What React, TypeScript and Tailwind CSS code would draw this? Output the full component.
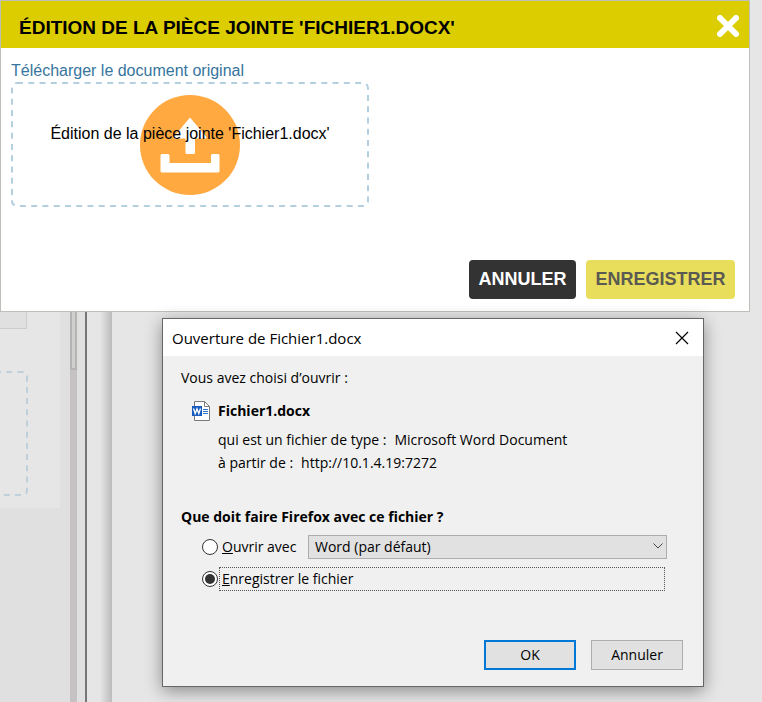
import React from "react";

function UploadIcon() {
  return (
    <svg className="size-[100px]" viewBox="0 0 100 100" aria-hidden="true">
      <circle cx="50" cy="50" r="50" fill="#ffa940" />
      <path
        d="M50 22.5 L66 41.5 Q67 43.5 65 43.5 H55 V57.500 Q55 59 53.500 59 H47 Q45.500 59 45.500 57.500 V43.500 H35 Q33 43.500 34 41.500 Z"
        fill="#fff"
      />
      <path
        d="M22 59 H28 Q29.500 59 29.500 60.500 V68 H71 V60.500 Q71 59 72.500 59 H78 Q79.500 59 79.500 60.500 V76 Q79.500 77.500 78 77.500 H22 Q20.500 77.500 20.500 76 V60.500 Q20.500 59 22 59 Z"
        fill="#fff"
      />
    </svg>
  );
}

function WordIcon() {
  return (
    <svg className="h-5 w-[18px]" viewBox="0 0 18 20" aria-hidden="true">
      <path d="M2.500 .5 H12.500 L17.500 5.500 V19.500 H2.500 Z" fill="#fff" stroke="#7a7a76" />
      <path d="M12.500 .5 V5.500 H17.500" fill="none" stroke="#7a7a76" />
      <path d="M11 8.500 H16 M11 10.500 H16 M11 12.500 H16" stroke="#2b72c8" />
      <rect y="5" width="10" height="10" fill="#185abd" />
      <path d="M1.500 7.500 L3.200 12.500 L5 8 L6.800 12.500 L8.500 7.500" fill="none" stroke="#fff" strokeWidth="1.400" />
    </svg>
  );
}

function Backdrop() {
  return (
    <div className="absolute inset-0 flex bg-[#e6e6e6]" aria-hidden="true">
      <div className="w-[70px] overflow-hidden bg-[#e0e0e0]">
        <div className="flex h-[508px] w-[60px] flex-col bg-[#e6e6e6]">
          <div className="h-[329px] w-[27px] border-r border-b border-[#cccccf] bg-[#e0e0e0]" />
          <svg className="mt-[42px] h-[125px] w-7" viewBox="0 0 28 125">
            <path
              d="M0 1 H22 Q27 1 27 6 V119 Q27 124 22 124 H0"
              fill="none"
              stroke="#c0d0da"
              strokeWidth="2"
              strokeDasharray="6 5.200"
              strokeDashoffset="5"
            />
          </svg>
        </div>
      </div>
      <div className="w-[7px] bg-[#c6c2c3]">
        <div className="h-[370px] border-x-2 border-b-2 border-[#b4b4b2] bg-[#cfcfcd]" />
      </div>
      <div className="w-2 bg-[#e0e0e0]" />
      <div className="w-0.5 bg-[#757778]" />
      <div className="w-[13px]" />
      <div className="w-3 bg-linear-to-r from-[#e6e6e6] to-[#bcbcbc]" />
    </div>
  );
}

function AttachmentModal() {
  return (
    <section className="relative mr-3 border border-[#c0beb8] bg-white font-['Liberation_Sans',Arial,sans-serif]">
      <header className="flex h-[47px] items-center justify-between bg-[#dccd00] pr-2.5 pl-[18px]">
        <h1 className="pt-1.5 text-[19px] leading-6 font-bold text-black">
          ÉDITION DE LA PIÈCE JOINTE 'FICHIER1.DOCX'
        </h1>
        <button type="button" aria-label="Fermer" className="mt-0.5">
          <svg className="size-[22px]" viewBox="0 0 22 22">
            <path d="M3 3 L19 19 M19 3 L3 19" stroke="#fff" strokeWidth="6" strokeLinecap="round" />
          </svg>
        </button>
      </header>
      <div className="px-2.5 pt-3">
        <a href="#original" className="block text-base leading-[22px] text-[#36759d]">
          Télécharger le document original
        </a>
        <div className="relative flex h-[125px] w-[358px] items-center justify-center">
          <svg className="absolute inset-0 size-full" viewBox="0 0 358 125" aria-hidden="true">
            <rect
              x="1"
              y="1"
              width="356"
              height="123"
              rx="5"
              fill="none"
              stroke="#b4cfe0"
              strokeWidth="2"
              strokeDasharray="6 5.270"
            />
          </svg>
          <UploadIcon />
          <p className="absolute inset-x-0 top-10 text-center text-base leading-6 text-black">
            Édition de la pièce jointe 'Fichier1.docx'
          </p>
        </div>
      </div>
      <footer className="mt-[53px] flex justify-end gap-2.5 pr-3.5 pb-3 text-lg font-bold">
        <button type="button" className="h-[39px] w-[107px] rounded bg-[#333333] pb-0.5 text-white">
          ANNULER
        </button>
        <button type="button" className="h-[39px] w-[149px] rounded bg-[#e8de5b] pb-0.5 text-[#5a5a52]">
          ENREGISTRER
        </button>
      </footer>
    </section>
  );
}

const radioClass =
  "size-4 appearance-none rounded-full border border-[#333333] bg-white p-0.5 checked:before:block checked:before:size-2.5 checked:before:rounded-full checked:before:bg-[#333333]";

function OpenFileDialog() {
  return (
    <section
      role="dialog"
      aria-labelledby="dialog-title"
      className="absolute top-[318px] left-[162px] w-[542px] border border-[#666666] bg-[#f0f0f0] font-['Open_Sans','Noto_Sans',sans-serif] text-sm leading-5 text-black shadow-[0_4px_16px_rgba(0,0,0,0.4)]"
    >
      <header className="flex h-[37px] items-center justify-between bg-white pr-3.5 pl-[9px]">
        <h2 id="dialog-title" className="text-[15px]">
          Ouverture de Fichier1.docx
        </h2>
        <button type="button" aria-label="Fermer la fenêtre">
          <svg className="size-[14px]" viewBox="0 0 14 14">
            <path d="M1 1 L13 13 M13 1 L1 13" stroke="#000" strokeWidth="1.200" />
          </svg>
        </button>
      </header>
      <div className="pt-3 pr-5 pb-4 pl-[18px]">
        <p>Vous avez choisi d’ouvrir :</p>
        <div className="mt-[13px] flex gap-2 pl-[11px]">
          <WordIcon />
          <p className="font-bold">Fichier1.docx</p>
        </div>
        <dl className="mt-[9px] flex flex-col gap-[3px] pl-[37px]">
          <div className="flex gap-2">
            <dt>qui est un fichier de type :</dt>
            <dd>Microsoft Word Document</dd>
          </div>
          <div className="flex gap-2">
            <dt>à partir de :</dt>
            <dd>http://10.1.4.19:7272</dd>
          </div>
        </dl>
        <fieldset className="mt-[34px] pl-[21px]">
          <legend className="-ml-[21px] font-bold">Que doit faire Firefox avec ce fichier ?</legend>
          <div className="mt-2 flex h-6 items-center pr-4">
            <input id="open-with" type="radio" name="action" className={radioClass} />
            <label htmlFor="open-with" className="ml-1 w-[86px] whitespace-nowrap">
              <u>O</u>uvrir avec
            </label>
            <div className="relative h-6 flex-1">
              <select
                aria-label="Application"
                className="h-6 w-full appearance-none border border-[#adadad] bg-[#e1e1e1] px-1.5"
              >
                <option>Word (par défaut)</option>
              </select>
              <svg className="pointer-events-none absolute top-2 right-1 h-1.5 w-2.5" viewBox="0 0 10 6" aria-hidden="true">
                <path d="M.5 .5 L5 5 L9.500 .5" fill="none" stroke="#444" />
              </svg>
            </div>
          </div>
          <div className="mt-2 flex h-6 items-center pr-[18px]">
            <input id="save-file" type="radio" name="action" defaultChecked className={radioClass} />
            <label
              htmlFor="save-file"
              className="ml-px flex h-6 flex-1 items-center border border-dotted border-[#555555] pl-0.5"
            >
              <span>
                <u>E</u>nregistrer le fichier
              </span>
            </label>
          </div>
        </fieldset>
        <footer className="mt-[49px] flex justify-end gap-[15px]">
          <button type="button" className="h-[30px] w-[92px] border-2 border-[#0078d7] bg-[#e1e1e1]">
            OK
          </button>
          <button type="button" className="h-[30px] w-[92px] border border-[#adadad] bg-[#e1e1e1]">
            Annuler
          </button>
        </footer>
      </div>
    </section>
  );
}

export default function App() {
  return (
    <main className="relative min-h-screen overflow-hidden">
      <Backdrop />
      <AttachmentModal />
      <OpenFileDialog />
    </main>
  );
}
